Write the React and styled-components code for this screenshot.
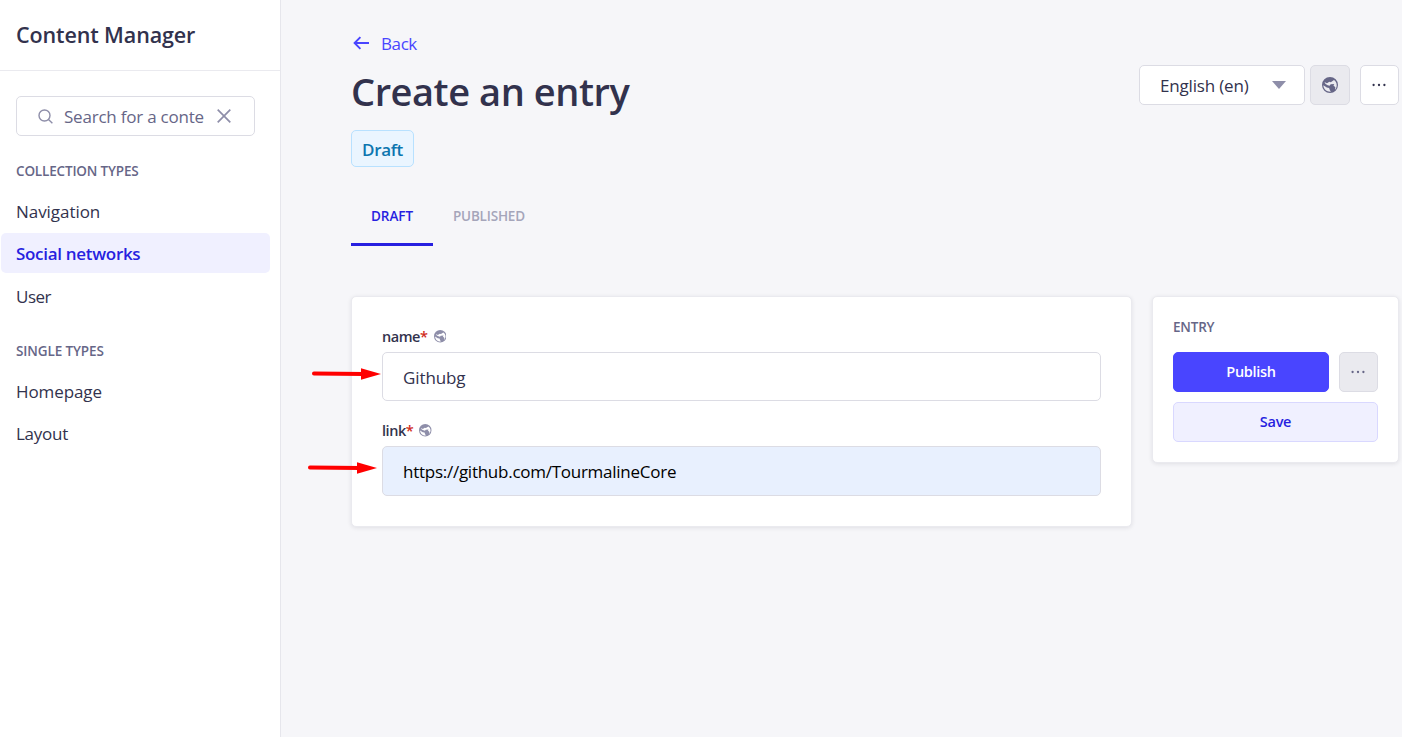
import React from "react";
import styled, { createGlobalStyle } from "styled-components";

const GlobalStyle = createGlobalStyle`
  *, *::before, *::after { box-sizing: border-box; }
  body {
    margin: 0;
    background: #f6f6f9;
    color: #32324d;
    font-family: "Open Sans", "Noto Sans", sans-serif;
    font-size: 17px;
    overflow: hidden;
  }
  button, input { font: inherit; margin: 0; letter-spacing: inherit; }
  h1, h2, h3, ul { margin: 0; padding: 0; font: inherit; }
  ul { list-style: none; }
`;

const Page = styled.div`
  display: flex;
  height: 737px;
`;

const Sidebar = styled.nav`
  flex: none;
  width: 281px;
  background: #ffffff;
  border-right: 1px solid #e6e6ec;
`;

const SidebarHeader = styled.div`
  height: 71px;
  padding: 0 16px;
  border-bottom: 1px solid #eaeaef;
`;

const SidebarTitle = styled.h2`
  font-size: 21.5px;
  font-weight: 600;
  line-height: 70px;
  letter-spacing: -0.12px;
  white-space: nowrap;
`;

const SearchBox = styled.div`
  display: flex;
  align-items: center;
  width: 239px;
  height: 40px;
  margin: 25px 0 0 16px;
  padding: 0 23px 0 21px;
  border: 1px solid #dcdce4;
  border-radius: 5px;
  color: #666687;
`;

const SearchText = styled.span`
  flex: 1;
  margin-left: 11px;
  font-size: 17px;
  line-height: 38px;
  padding-top: 2px;
  letter-spacing: -0.22px;
  white-space: nowrap;
`;

const SectionLabel = styled.h3`
  height: 18px;
  margin: ${(p) => p.$top}px 0 0 16px;
  color: #666687;
  font-size: 13.5px;
  font-weight: 600;
  line-height: 18px;
  letter-spacing: ${(p) => p.$spacing}px;
`;

const NavList = styled.ul`
  display: flex;
  flex-direction: column;
  gap: 2.4px;
  padding: 11px 10px 0 1px;
`;

const NavItem = styled.li`
  height: 40px;
  padding-left: 15px;
  border-radius: 5px;
  background: ${(p) => (p.$active ? "#f0f0ff" : "transparent")};
  color: ${(p) => (p.$active ? "#271fe0" : "#32324d")};
  font-size: 17px;
  font-weight: ${(p) => (p.$active ? 600 : 400)};
  line-height: 42px;
  letter-spacing: ${(p) => p.$spacing}px;
`;

const Main = styled.main`
  flex: 1;
  padding: 31px 3px 0 70px;
`;

const Header = styled.header`
  display: flex;
  justify-content: space-between;
  height: 136px;
`;

const BackLink = styled.a`
  display: flex;
  align-items: center;
  height: 24px;
  padding-left: 2px;
  gap: 12px;
  color: #4945ff;
  font-size: 17px;
  letter-spacing: -0.4px;
`;

const Title = styled.h1`
  height: 50px;
  margin-top: 11px;
  font-size: 38px;
  font-weight: 600;
  line-height: 50px;
  letter-spacing: -0.45px;
  white-space: nowrap;
`;

const Badge = styled.span`
  display: inline-block;
  height: 37px;
  width: 63px;
  margin-top: 14px;
  border: 1px solid #b8e1ff;
  border-radius: 5px;
  background: #eaf5ff;
  color: #0c75af;
  font-size: 17px;
  font-weight: 600;
  line-height: 37px;
  letter-spacing: -0.3px;
  text-align: center;
`;

const Toolbar = styled.div`
  display: flex;
  margin-top: 34px;
`;

const LocaleSelect = styled.div`
  display: flex;
  align-items: center;
  justify-content: space-between;
  width: 166px;
  height: 40px;
  padding: 0 18px 0 20px;
  border: 1px solid #dcdce4;
  border-radius: 5px;
  background: #ffffff;
  font-size: 17px;
  letter-spacing: -0.18px;
`;

const IconButton = styled.button`
  display: flex;
  flex: none;
  align-items: center;
  justify-content: center;
  width: ${(p) => p.$width}px;
  height: 40px;
  margin-left: ${(p) => p.$gap}px;
  padding: 0 1px 0 0;
  border: 1px solid #dcdce4;
  border-radius: 5px;
  background: ${(p) => (p.$muted ? "#eaeaef" : "#ffffff")};
  color: ${(p) => (p.$muted ? "#666687" : "#32324d")};
`;

const Tabs = styled.div`
  display: flex;
  margin-top: 19px;
`;

const Tab = styled.div`
  height: 60px;
  padding: 0 20px;
  width: ${(p) => p.$width}px;
  border-bottom: 3px solid ${(p) => (p.$active ? "#271fe0" : "transparent")};
  color: ${(p) => (p.$active ? "#271fe0" : "#a5a5ba")};
  font-size: 13.5px;
  font-weight: 600;
  line-height: 60px;
  letter-spacing: ${(p) => p.$spacing}px;
`;

const Content = styled.div`
  display: grid;
  grid-template-columns: 781px 247px;
  align-items: start;
  justify-content: space-between;
  margin-top: 50px;
`;

const Card = styled.section`
  height: ${(p) => p.$height}px;
  padding: ${(p) => p.$padding};
  border: 1px solid #eaeaef;
  border-radius: 5px;
  background: #ffffff;
  box-shadow: 0 1px 4px rgba(33, 33, 52, 0.1);
`;

const Field = styled.div`
  position: relative;
  margin-bottom: 19px;
`;

const FieldLabel = styled.label`
  display: flex;
  align-items: center;
  height: 20px;
  margin-bottom: 6px;
  font-size: 14.5px;
  font-weight: 600;
  letter-spacing: -0.45px;

  svg { margin: 1px 0 0 6px; color: #8e8ea9; }
`;

const Required = styled.span`
  color: #d02b20;
`;

const Input = styled.input`
  display: block;
  width: 100%;
  height: ${(p) => p.$height}px;
  padding: 1px 20px 0;
  border: 1px solid #dcdce4;
  border-radius: 5px;
  outline: none;
  background: ${(p) => (p.$filled ? "#e8f0fe" : "#ffffff")};
  color: ${(p) => (p.$filled ? "#000000" : "#32324d")};
  font-size: 17px;
  letter-spacing: ${(p) => p.$spacing}px;
`;

const Pointer = styled.svg`
  position: absolute;
  left: ${(p) => p.$left}px;
  top: ${(p) => p.$top}px;
`;

const EntryTitle = styled.h2`
  height: 18px;
  color: #666687;
  font-size: 13.5px;
  font-weight: 600;
  line-height: 18px;
  letter-spacing: -0.2px;
`;

const Actions = styled.div`
  display: flex;
  margin: 16px 0 10px;
`;

const Button = styled.button`
  flex: 1;
  width: 100%;
  height: 40px;
  padding: 0 0 2px;
  border: 1px solid ${(p) => (p.$primary ? "#4945ff" : "#d9d8ff")};
  border-radius: 5px;
  background: ${(p) => (p.$primary ? "#4945ff" : "#f0f0ff")};
  color: ${(p) => (p.$primary ? "#ffffff" : "#271fe0")};
  font-size: 14.5px;
  font-weight: 600;
  letter-spacing: -0.3px;
`;

const Globe = ({ size }) => (
  <svg width={size} height={size} viewBox="0 0 24 24" fill="currentColor">
    <path
      fillRule="evenodd"
      d="M12 0a12 12 0 1 0 0 24a12 12 0 0 0 0-24Z
         M3.6 7.6L7.4 9.4L11 7.2L13.2 7.8L18 4.6C20.6 6.6 22 9 22.1 12.2C22.1 15 21 17.4 19.4 19.2L20 15.4L17.2 12.6L18.4 10.4L13 10.8L11.4 13L8.6 12.2L5.4 10.4Z
         M2 12.4L7.2 15.6L10.6 16.4L11.6 19L13.2 22C7.4 22.4 2.4 18.6 2 12.4Z"
    />
  </svg>
);

const Dots = () => (
  <svg width="16" height="4" viewBox="0 0 16 4" fill="currentColor">
    <circle cx="2.6" cy="2" r="1.15" />
    <circle cx="8" cy="2" r="1.15" />
    <circle cx="13.4" cy="2" r="1.15" />
  </svg>
);

const Arrow = ({ left, top }) => (
  <Pointer $left={left} $top={top} width="72" height="14" viewBox="0 0 72 14">
    <path d="M3 6.5L53 7" stroke="#ff0000" strokeWidth="4" strokeLinecap="round" />
    <path d="M50 1.2L70 7L50 12.8Z" fill="#ff0000" />
  </Pointer>
);

export default function App() {
  return (
    <>
      <GlobalStyle />
      <Page>
        <Sidebar>
          <SidebarHeader>
            <SidebarTitle>Content Manager</SidebarTitle>
          </SidebarHeader>
          <SearchBox>
            <svg width="15" height="15" viewBox="0 0 15 15" fill="none" stroke="#8e8ea9" strokeWidth="1.4">
              <circle cx="6.5" cy="6.5" r="5.5" />
              <path d="M10.5 10.5L14.4 14.2" />
            </svg>
            <SearchText>Search for a conte</SearchText>
            <svg width="14" height="14" viewBox="0 0 14 14" fill="none" stroke="#8e8ea9" strokeWidth="1.7">
              <path d="M0.7 0.7L13.3 13.3M13.3 0.7L0.7 13.3" />
            </svg>
          </SearchBox>
          <SectionLabel $top={26} $spacing={-0.17}>COLLECTION TYPES</SectionLabel>
          <NavList>
            <NavItem $spacing={-0.05}>Navigation</NavItem>
            <NavItem $active $spacing={-0.3}>Social networks</NavItem>
            <NavItem $spacing={-0.5}>User</NavItem>
          </NavList>
          <SectionLabel $top={26} $spacing={-0.12}>SINGLE TYPES</SectionLabel>
          <NavList>
            <NavItem $spacing={-0.1}>Homepage</NavItem>
            <NavItem $spacing={-0.25}>Layout</NavItem>
          </NavList>
        </Sidebar>
        <Main>
          <Header>
            <div>
              <BackLink>
                <svg width="16" height="14" viewBox="0 0 16 14" fill="none" stroke="currentColor" strokeWidth="1.9">
                  <path d="M16 7H1.6M7.4 1.2L1.6 7L7.4 12.8" />
                </svg>
                Back
              </BackLink>
              <Title>Create an entry</Title>
              <Badge>Draft</Badge>
            </div>
            <Toolbar>
              <LocaleSelect>
                English (en)
                <svg width="14" height="8" viewBox="0 0 14 8" fill="#8e8ea9">
                  <path d="M0 0H14L7 8Z" />
                </svg>
              </LocaleSelect>
              <IconButton $width={40} $gap={5} $muted><Globe size={16} /></IconButton>
              <IconButton $width={39} $gap={10}><Dots /></IconButton>
            </Toolbar>
          </Header>
          <Tabs>
            <Tab $active $width={82} $spacing={-0.05}>DRAFT</Tab>
            <Tab $spacing={-0.2}>PUBLISHED</Tab>
          </Tabs>
          <Content>
            <Card $height={231} $padding="29px 30px">
              <Field>
                <FieldLabel>name<Required>*</Required><Globe size={12.5} /></FieldLabel>
                <Input $height={49} $spacing={-0.1} defaultValue="Githubg" />
                <Arrow left={-71} top={41} />
              </Field>
              <Field>
                <FieldLabel>link<Required>*</Required><Globe size={12.5} /></FieldLabel>
                <Input $height={50} $filled $spacing={-0.26} defaultValue="https://github.com/TourmalineCore" />
                <Arrow left={-75} top={41} />
              </Field>
            </Card>
            <Card $height={167} $padding="21px 20px">
              <EntryTitle>ENTRY</EntryTitle>
              <Actions>
                <Button $primary>Publish</Button>
                <IconButton $width={39} $gap={10} $muted><Dots /></IconButton>
              </Actions>
              <Button>Save</Button>
            </Card>
          </Content>
        </Main>
      </Page>
    </>
  );
}
